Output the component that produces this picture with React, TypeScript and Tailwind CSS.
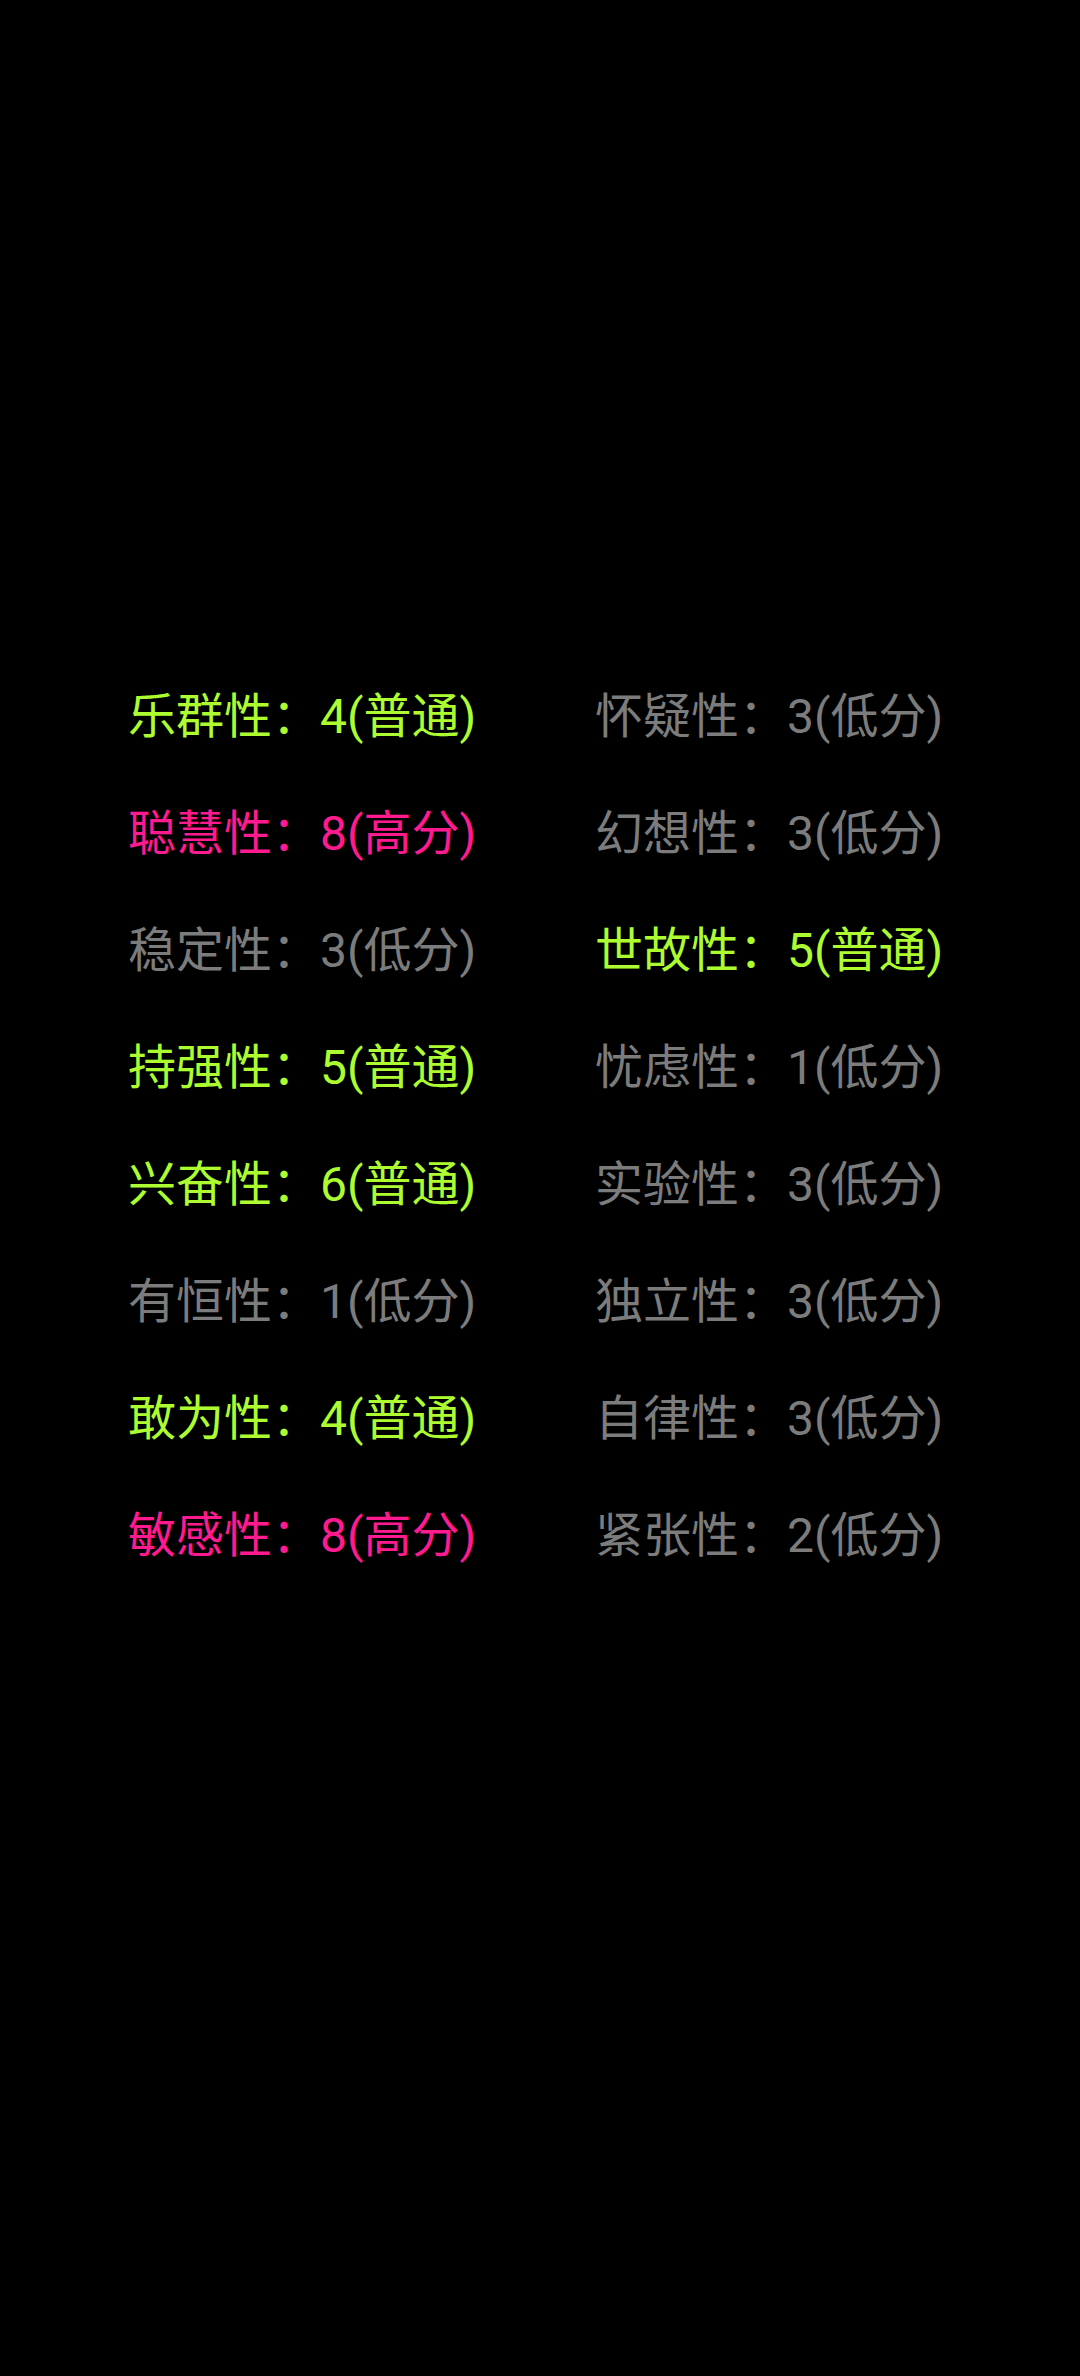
import React from 'react';

type Level = 'high' | 'mid' | 'low';

const rows: [string, number, Level, string, number, Level][] = [
  ['乐群性', 4, 'mid', '怀疑性', 3, 'low'],
  ['聪慧性', 8, 'high', '幻想性', 3, 'low'],
  ['稳定性', 3, 'low', '世故性', 5, 'mid'],
  ['持强性', 5, 'mid', '忧虑性', 1, 'low'],
  ['兴奋性', 6, 'mid', '实验性', 3, 'low'],
  ['有恒性', 1, 'low', '独立性', 3, 'low'],
  ['敢为性', 4, 'mid', '自律性', 3, 'low'],
  ['敏感性', 8, 'high', '紧张性', 2, 'low'],
];

const label: Record<Level, string> = { high: '高分', mid: '普通', low: '低分' };
const color: Record<Level, string> = {
  high: 'text-[#ff1a90]',
  mid: 'text-[#acfc30]',
  low: 'text-[#7c7c7c]',
};

const Trait = ({ name, score, level }: { name: string; score: number; level: Level }) => (
  <div className={`whitespace-nowrap ${color[level]}`}>
    {name}：{score}({label[level]})
  </div>
);

export default function App() {
  return (
    <div
      className="min-h-[2376px] w-[1080px] bg-black pt-[658px] text-[48px] leading-[117px]"
      style={{ fontFamily: 'Roboto, "Noto Sans CJK SC", sans-serif' }}
    >
      {rows.map(([a, as, al, b, bs, bl]) => (
        <div key={a} className="grid grid-cols-[467px_1fr] pl-[128px]">
          <Trait name={a} score={as} level={al} />
          <Trait name={b} score={bs} level={bl} />
        </div>
      ))}
    </div>
  );
}
